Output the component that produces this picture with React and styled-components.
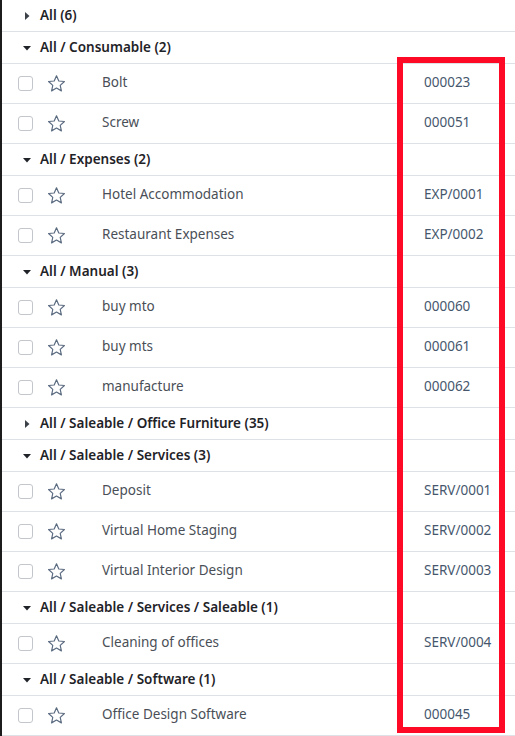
import React from "react";
import styled, { createGlobalStyle } from "styled-components";

const GlobalStyle = createGlobalStyle`
  html, body {
    margin: 0;
    padding: 0;
    background: #ffffff;
  }
  body {
    font-family: "Noto Sans", "DejaVu Sans", sans-serif;
    font-size: 14px;
  }
`;

const groups = [
  { label: "All (6)", open: false, rows: [] },
  {
    label: "All / Consumable (2)",
    open: true,
    rows: [
      { name: "Bolt", ref: "000023" },
      { name: "Screw", ref: "000051" }
    ]
  },
  {
    label: "All / Expenses (2)",
    open: true,
    rows: [
      { name: "Hotel Accommodation", ref: "EXP/0001" },
      { name: "Restaurant Expenses", ref: "EXP/0002" }
    ]
  },
  {
    label: "All / Manual (3)",
    open: true,
    rows: [
      { name: "buy mto", ref: "000060" },
      { name: "buy mts", ref: "000061" },
      { name: "manufacture", ref: "000062" }
    ]
  },
  { label: "All / Saleable / Office Furniture (35)", open: false, rows: [] },
  {
    label: "All / Saleable / Services (3)",
    open: true,
    rows: [
      { name: "Deposit", ref: "SERV/0001" },
      { name: "Virtual Home Staging", ref: "SERV/0002" },
      { name: "Virtual Interior Design", ref: "SERV/0003" }
    ]
  },
  {
    label: "All / Saleable / Services / Saleable (1)",
    open: true,
    rows: [{ name: "Cleaning of offices", ref: "SERV/0004" }]
  },
  {
    label: "All / Saleable / Software (1)",
    open: true,
    rows: [{ name: "Office Design Software", ref: "000045" }]
  }
];

const App = () => {
  return (
    <>
      <GlobalStyle />
      <Page>
        <List>
          {groups.map((group, gi) => (
            <React.Fragment key={gi}>
              <GroupRow>
                <Caret open={group.open} />
                <GroupLabel>{group.label}</GroupLabel>
              </GroupRow>
              {group.rows.map((row, ri) => (
                <RecordRow key={ri}>
                  <CheckCell>
                    <Checkbox />
                  </CheckCell>
                  <StarCell>
                    <StarIcon />
                  </StarCell>
                  <NameCell>{row.name}</NameCell>
                  <RefCell>{row.ref}</RefCell>
                </RecordRow>
              ))}
            </React.Fragment>
          ))}
        </List>
        {/* highlight around reference column */}
        <Highlight />
      </Page>
    </>
  );
};

const Caret = ({ open }) => (
  <CaretBox>
    <svg width="8" height="8" viewBox="0 0 8 8">
      {open ? (
        <polygon points="0,2 8,2 4,6.5" fill="#1f2328" />
      ) : (
        <polygon points="2,0 6.5,4 2,8" fill="#3d4249" />
      )}
    </svg>
  </CaretBox>
);

const StarIcon = () => (
  <svg width="19" height="19" viewBox="0 0 24 24">
    <polygon
      points="12,2.2 14.9,8.8 22,9.5 16.7,14.3 18.2,21.3 12,17.7 5.8,21.3 7.3,14.3 2,9.5 9.1,8.8"
      fill="none"
      stroke="#5b6b80"
      strokeWidth="1.5"
      strokeLinejoin="round"
    />
  </svg>
);

const Page = styled.div`
  position: relative;
  width: 515px;
  height: 736px;
  overflow: hidden;
  box-sizing: border-box;
  border-left: 2px solid #1c1c1c;
  background: #fff;
`;

const List = styled.div`
  display: flex;
  flex-direction: column;
`;

const GroupRow = styled.div`
  display: flex;
  align-items: center;
  height: 32px;
  box-sizing: border-box;
  border-bottom: 1px solid #dee2e6;
  padding: 0 0 2px 21px;
`;

const CaretBox = styled.span`
  display: flex;
  align-items: center;
  justify-content: center;
  width: 8px;
  margin: 2px 9px 0 0;
`;

const GroupLabel = styled.span`
  font-weight: 600;
  font-size: 13.5px;
  color: #1f2328;
`;

const RecordRow = styled.div`
  display: grid;
  grid-template-columns: 44px 56px 1fr 91px;
  align-items: center;
  height: 40px;
  box-sizing: border-box;
  border-bottom: 1px solid #dee2e6;
  font-size: 13.5px;
  color: #4a4f57;
`;

const CheckCell = styled.div`
  display: flex;
  padding-left: 16px;
`;

const Checkbox = styled.span`
  width: 13px;
  height: 13px;
  border: 1px solid #c3c6ca;
  border-radius: 3px;
  background: #fff;
`;

const StarCell = styled.div`
  display: flex;
  align-items: center;
  padding-left: 1px;
`;

const NameCell = styled.div`
  white-space: nowrap;
  padding-bottom: 3px;
`;

const RefCell = styled.div`
  color: #46576d;
  white-space: nowrap;
  padding-bottom: 3px;
`;

const Highlight = styled.div`
  position: absolute;
  left: 395px;
  top: 57px;
  width: 108px;
  height: 676px;
  box-sizing: border-box;
  border: 6px solid #ff0a26;
  pointer-events: none;
`;

export default App;
